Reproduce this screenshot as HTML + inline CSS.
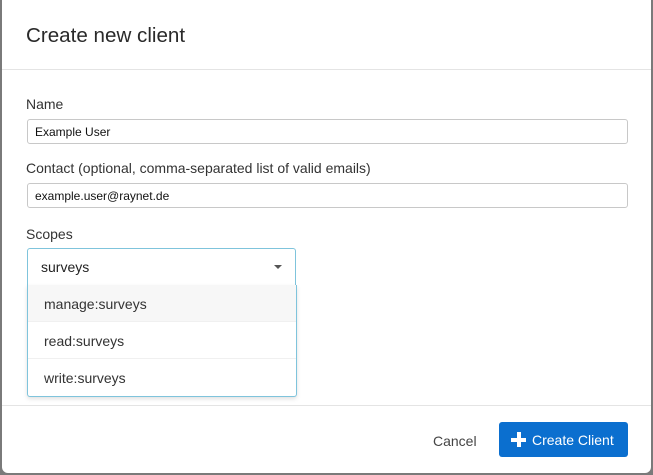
<!DOCTYPE html>
<html><head><style>
*{box-sizing:border-box;margin:0;padding:0}
body{width:653px;height:475px;background:#7a7a7a;font-family:"Liberation Sans",sans-serif;color:#333;position:relative;overflow:hidden}
.m{position:absolute;left:2px;top:0;width:649px;height:473px;background:#fff;border-radius:0 0 6px 6px}
.t{position:absolute;left:24px;top:24px;font-size:20.6px;color:#2a2a2a}
.hr{position:absolute;left:0;right:0;height:1px;background:#e4e4e4}
.l{position:absolute;left:24px;font-size:14px;color:#333}
.in{position:absolute;left:25px;width:601px;height:25px;border:1px solid #c8c8c8;border-radius:3px;font-size:12px;padding:5px 7px;color:#111}
.sel{position:absolute;left:25px;top:248px;width:269px;height:37px;border:1px solid #7fc4dc;border-radius:3px 3px 0 0;border-bottom:none;font-size:14px;padding:10px 13px;color:#222}
.car{position:absolute;right:13px;top:16px;width:0;height:0;border-left:4px solid transparent;border-right:4px solid transparent;border-top:4px solid #555}
.dd{position:absolute;left:25px;top:285px;width:270px;height:112px;border:1px solid #7fc4dc;border-top:none;border-radius:0 0 3px 3px;box-shadow:0 2px 4px rgba(0,0,0,.12);background:#fff}
.it{height:37px;font-size:14px;padding:11px 16px;color:#333;border-bottom:1px solid #f0f0f0}
.btn{position:absolute;left:497px;top:422px;width:129px;height:35px;background:#0b6fcf;border-radius:3px;color:#fff;font-size:14px;padding:10px 0 0 33px}
.pl{position:absolute;left:12px;top:10px;width:15px;height:15px}
.pl:before{content:"";position:absolute;left:5.5px;top:0;width:4px;height:15px;background:#fff}
.pl:after{content:"";position:absolute;top:5.5px;left:0;height:4px;width:15px;background:#fff}
</style></head><body>
<div class="m">
<div class="t">Create new client</div>
<div class="hr" style="top:69px"></div>
<div class="l" style="top:96px">Name</div>
<div class="in" style="top:119px">Example User</div>
<div class="l" style="top:160px">Contact (optional, comma-separated list of valid emails)</div>
<div class="in" style="top:183px">example.user@raynet.de</div>
<div class="l" style="top:226px">Scopes</div>
<div class="sel">surveys<div class="car"></div></div>
<div class="dd">
<div class="it" style="background:#f7f7f7">manage:surveys</div>
<div class="it">read:surveys</div>
<div class="it" style="border:none">write:surveys</div>
</div>
<div class="hr" style="top:405px"></div>
<div style="position:absolute;left:431px;top:433px;font-size:14px;color:#444">Cancel</div>
<div class="btn"><div class="pl"></div>Create Client</div>
</div>
</body></html>
